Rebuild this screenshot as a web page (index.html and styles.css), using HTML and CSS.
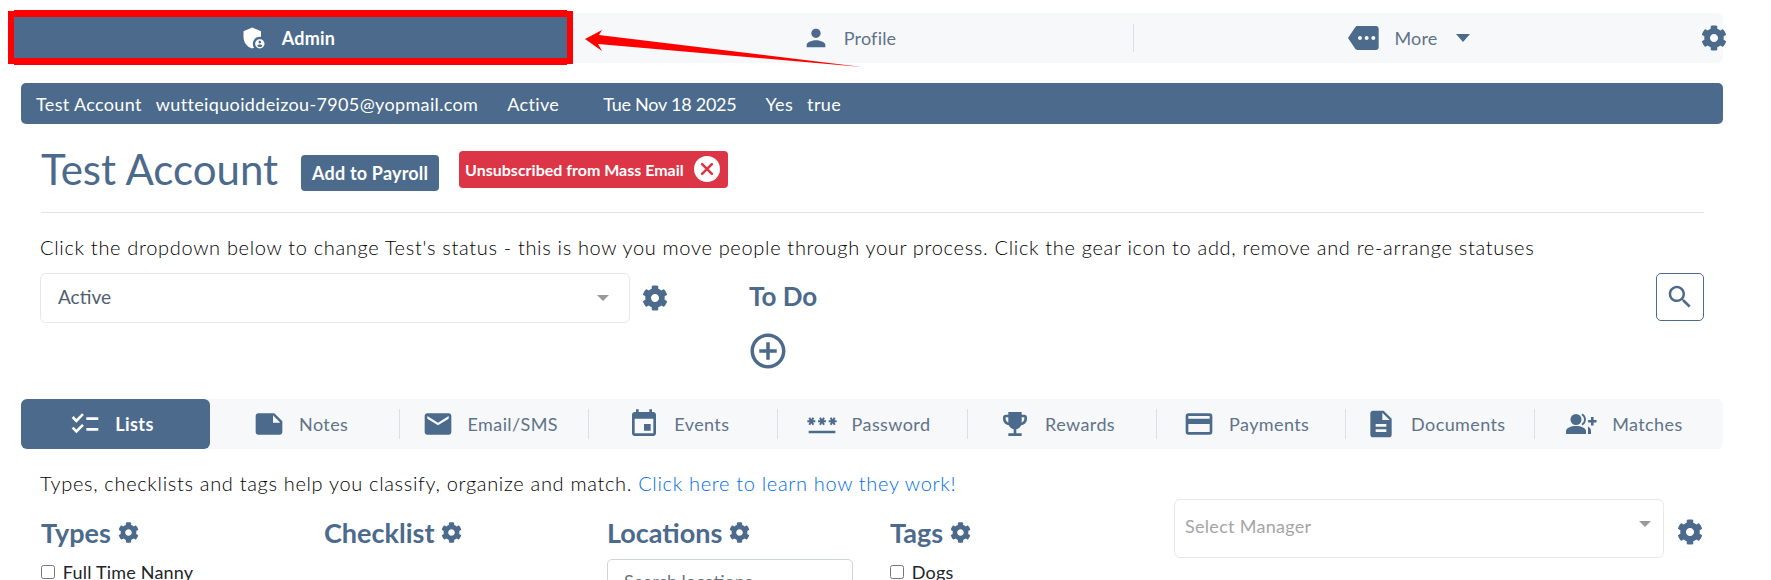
FILE: index.html
```html
<!DOCTYPE html>
<html>
<head>
    <meta name="viewport" content="width=device-width, initial-scale=1">
    <title>Test Account</title>
    <link rel="stylesheet" href="styles.css">
</head>
<body>
    <svg class="sprites" width="0" height="0">
        <symbol id="cog" viewBox="0 0 512 512"><path d="M487.4 315.7l-42.6-24.6c4.3-23.2 4.3-47 0-70.2l42.6-24.6c4.9-2.8 7.1-8.6 5.5-14-11.1-35.6-30-67.8-54.7-94.6-3.8-4.1-10-5.1-14.8-2.3L380.8 110c-17.9-15.4-38.5-27.3-60.8-35.1V25.8c0-5.6-3.9-10.5-9.4-11.7-36.7-8.2-74.3-7.8-109.2 0-5.5 1.2-9.4 6.1-9.4 11.7V75c-22.2 7.9-42.8 19.8-60.8 35.1L88.7 85.5c-4.9-2.8-11-1.9-14.8 2.3-24.7 26.7-43.6 58.9-54.7 94.6-1.7 5.4.6 11.2 5.5 14L67.3 221c-4.3 23.2-4.3 47 0 70.2l-42.6 24.6c-4.9 2.8-7.1 8.6-5.5 14 11.1 35.6 30 67.8 54.7 94.6 3.8 4.1 10 5.1 14.8 2.3l42.6-24.6c17.9 15.4 38.5 27.3 60.8 35.1v49.2c0 5.6 3.9 10.5 9.4 11.7 36.7 8.2 74.3 7.8 109.2 0 5.5-1.2 9.4-6.1 9.4-11.7v-49.2c22.2-7.9 42.8-19.8 60.8-35.1l42.6 24.6c4.9 2.8 11 1.9 14.8-2.3 24.7-26.7 43.6-58.9 54.7-94.6 1.5-5.5-.7-11.3-5.6-14.1zM256 336c-44.1 0-80-35.9-80-80s35.9-80 80-80 80 35.9 80 80-35.9 80-80 80z"/></symbol>
    </svg>

    <div class="top-nav">
        <div class="nav-item active">
            <svg class="nav-icon admin-icon" viewBox="0 0 24 24"><path d="M17 11c.34 0 .67.04 1 .09V6.27L10.5 3 3 6.27v4.91c0 4.54 3.2 8.79 7.5 9.82.55-.13 1.08-.32 1.6-.55-.69-.98-1.1-2.17-1.1-3.45 0-3.31 2.69-6 6-6z"/><path d="M17 13c-2.21 0-4 1.79-4 4s1.79 4 4 4 4-1.79 4-4-1.79-4-4-4zm0 1.38c.62 0 1.12.51 1.12 1.12s-.51 1.12-1.12 1.12-1.12-.51-1.12-1.12.5-1.12 1.12-1.12zm0 5.37c-.93 0-1.74-.46-2.24-1.17.05-.72 1.51-1.08 2.24-1.08s2.19.36 2.24 1.08c-.5.71-1.31 1.17-2.24 1.17z"/></svg>
            <span>Admin</span>
        </div>
        <div class="nav-item profile-item">
            <svg class="nav-icon" viewBox="0 0 24 24"><path d="M12 12c2.21 0 4-1.79 4-4s-1.79-4-4-4-4 1.79-4 4 1.79 4 4 4zm0 2c-2.67 0-8 1.34-8 4v2h16v-2c0-2.66-5.33-4-8-4z"/></svg>
            <span>Profile</span>
        </div>
        <div class="nav-item with-divider">
            <svg class="nav-icon more-icon" viewBox="0 0 24 24"><path d="M21 3H7c-.69 0-1.23.35-1.59.88L0 12l5.41 8.11c.36.53.9.89 1.59.89h14c1.1 0 2-.9 2-2V5c0-1.1-.9-2-2-2zM9 13.5c-.83 0-1.5-.67-1.5-1.5s.67-1.5 1.5-1.5 1.5.67 1.5 1.5-.67 1.5-1.5 1.5zm5 0c-.83 0-1.5-.67-1.5-1.5s.67-1.5 1.5-1.5 1.5.67 1.5 1.5-.67 1.5-1.5 1.5zm5 0c-.83 0-1.5-.67-1.5-1.5s.67-1.5 1.5-1.5 1.5.67 1.5 1.5-.67 1.5-1.5 1.5z"/></svg>
            <span>More</span>
            <i class="caret"></i>
        </div>
        <svg class="cog nav-cog"><use href="#cog"/></svg>
    </div>

    <svg class="red-arrow" viewBox="0 0 300 50" width="300" height="50"><polygon points="1,16 18,7 15,12 278,44 14,21 18,28"/></svg>

    <div class="info-bar">
        <span>Test Account</span>
        <span class="info-email">wutteiquoiddeizou-7905@yopmail.com</span>
        <span class="info-status">Active</span>
        <span class="info-date">Tue Nov 18 2025</span>
        <span class="info-status">Yes</span>
        <span class="info-email">true</span>
    </div>

    <div class="main">
        <div class="title-row">
            <h1>Test Account</h1>
            <button class="payroll-btn">Add to Payroll</button>
            <div class="unsub-badge">
                Unsubscribed from Mass Email
                <svg class="unsub-x" viewBox="0 0 24 24"><circle cx="12" cy="12" r="12" fill="#fff"/><path d="M7.5 7.5l9 9M16.5 7.5l-9 9" stroke="#dc3545" stroke-width="2.4" stroke-linecap="round"/></svg>
            </div>
        </div>
        <p class="help-text">Click the dropdown below to change Test's status - this is how you move people through your process. Click the gear icon to add, remove and re-arrange statuses</p>

        <div class="status-row">
            <div class="select-box status-select"><span>Active</span><i class="select-caret"></i></div>
            <svg class="cog status-cog"><use href="#cog"/></svg>
            <div class="todo">
                <h3>To Do</h3>
                <svg class="plus-icon" viewBox="0 0 24 24"><path d="M13 7h-2v4H7v2h4v4h2v-4h4v-2h-4V7zm-1-5C6.48 2 2 6.48 2 12s4.48 10 10 10 10-4.48 10-10S17.52 2 12 2zm0 18c-4.41 0-8-3.59-8-8s3.59-8 8-8 8 3.59 8 8-3.59 8-8 8z"/></svg>
            </div>
            <div class="search-btn">
                <svg viewBox="0 0 24 24"><path d="M15.5 14h-.79l-.28-.27C15.41 12.59 16 11.11 16 9.5 16 5.91 13.09 3 9.5 3S3 5.91 3 9.5 5.91 16 9.5 16c1.61 0 3.09-.59 4.23-1.57l.27.28v.79l5 4.99L20.49 19l-4.99-5zm-6 0C7.01 14 5 11.99 5 9.5S7.01 5 9.5 5 14 7.01 14 9.5 11.99 14 9.5 14z"/></svg>
            </div>
        </div>
    </div>

    <div class="tabs">
        <div class="tab active">
            <svg viewBox="0 0 24 24"><path d="M22 7h-9v2h9V7zm0 8h-9v2h9v-2zM5.54 11 2 7.46l1.41-1.41 2.12 2.12 4.24-4.24 1.41 1.41L5.54 11zm0 8L2 15.46l1.41-1.41 2.12 2.12 4.24-4.24 1.41 1.41L5.54 19z"/></svg>
            <span>Lists</span>
        </div>
        <div class="tab">
            <svg viewBox="0 0 24 24"><path d="M22 10l-6-6H4c-1.1 0-2 .9-2 2v12.01c0 1.1.9 1.99 2 1.99l16-.01c1.1 0 2-.89 2-1.99v-8zm-7-4.5l5.5 5.5H15V5.5z"/></svg>
            <span>Notes</span>
        </div>
        <div class="tab">
            <svg viewBox="0 0 24 24"><path d="M20 4H4c-1.1 0-1.99.9-1.99 2L2 18c0 1.1.9 2 2 2h16c1.1 0 2-.9 2-2V6c0-1.1-.9-2-2-2zm0 4l-8 5-8-5V6l8 5 8-5v2z"/></svg>
            <span>Email/SMS</span>
        </div>
        <div class="tab">
            <svg viewBox="0 0 24 24"><path d="M17 12h-5v5h5v-5zM16 1v2H8V1H6v2H5c-1.11 0-1.99.9-1.99 2L3 19c0 1.1.89 2 2 2h14c1.1 0 2-.9 2-2V5c0-1.1-.9-2-2-2h-1V1h-2zm3 18H5V8h14v11z"/></svg>
            <span>Events</span>
        </div>
        <div class="tab">
            <svg viewBox="0 0 24 24"><path d="M2 17h20v2H2v-2zm1.15-4.05L4 11.47l.85 1.48 1.3-.75-.85-1.48H7v-1.5H5.3l.85-1.47L4.85 7 4 8.47 3.15 7l-1.3.75.85 1.47H1v1.5h1.7l-.85 1.48 1.3.75zm6.7-.75 1.3.75.85-1.48.85 1.48 1.3-.75-.85-1.48H15v-1.5h-1.7l.85-1.47-1.3-.75L12 8.47 11.15 7l-1.3.75.85 1.47H9v1.5h1.7l-.85 1.48zM23 9.22h-1.7l.85-1.47-1.3-.75L20 8.47 19.15 7l-1.3.75.85 1.47H17v1.5h1.7l-.85 1.48 1.3.75.85-1.48.85 1.48 1.3-.75-.85-1.48H23v-1.5z"/></svg>
            <span>Password</span>
        </div>
        <div class="tab">
            <svg viewBox="0 0 24 24"><path d="M19 5h-2V3H7v2H5c-1.1 0-2 .9-2 2v1c0 2.55 1.92 4.63 4.39 4.94.63 1.5 1.98 2.63 3.61 2.96V19H7v2h10v-2h-4v-3.1c1.63-.33 2.98-1.46 3.61-2.96C19.08 12.63 21 10.55 21 8V7c0-1.1-.9-2-2-2zM5 8V7h2v3.82C5.84 10.4 5 9.3 5 8zm14 0c0 1.3-.84 2.4-2 2.82V7h2v1z"/></svg>
            <span>Rewards</span>
        </div>
        <div class="tab">
            <svg viewBox="0 0 24 24"><path d="M20 4H4c-1.11 0-1.99.89-1.99 2L2 18c0 1.11.89 2 2 2h16c1.11 0 2-.89 2-2V6c0-1.11-.89-2-2-2zm0 14H4v-6h16v6zm0-10H4V6h16v2z"/></svg>
            <span>Payments</span>
        </div>
        <div class="tab">
            <svg viewBox="0 0 24 24"><path d="M14 2H6c-1.1 0-1.99.9-1.99 2L4 20c0 1.1.89 2 1.99 2H18c1.1 0 2-.9 2-2V8l-6-6zm2 16H8v-2h8v2zm0-4H8v-2h8v2zm-3-5V3.5L18.5 9H13z"/></svg>
            <span>Documents</span>
        </div>
        <div class="tab">
            <svg viewBox="0 0 32 32"><circle cx="10" cy="11.5" r="5.5"/><path d="M0 26v-3c0-3 5-5 10-5s10 2 10 5v3z"/><path d="M22 18.6c1.6.9 3 2.3 3 4.4v3h-3z"/><path d="M16 6.2c2 1.3 3 3.2 3 5.3s-1 4-3 5.3" fill="none" stroke="#4b6a8c" stroke-width="1.8"/><path d="M25 9h2.6v2.9h2.9v2.6h-2.9v2.9H25v-2.9h-2.9v-2.6H25z"/></svg>
            <span>Matches</span>
        </div>
    </div>

    <div class="lists">
        <div class="lists-left">
            <p class="help-text">Types, checklists and tags help you classify, organize and match. <a href="#">Click here to learn how they work!</a></p>
            <div class="list-cols">
                <div class="list-col">
                    <h3>Types <svg class="cog"><use href="#cog"/></svg></h3>
                    <label><input type="checkbox"> Full Time Nanny</label>
                </div>
                <div class="list-col">
                    <h3>Checklist <svg class="cog"><use href="#cog"/></svg></h3>
                </div>
                <div class="list-col">
                    <h3>Locations <svg class="cog"><use href="#cog"/></svg></h3>
                    <div class="location-search">Search locations</div>
                </div>
                <div class="list-col">
                    <h3>Tags <svg class="cog"><use href="#cog"/></svg></h3>
                    <label><input type="checkbox"> Dogs</label>
                </div>
            </div>
        </div>
        <div class="manager">
            <div class="select-box manager-select"><span>Select Manager</span><i class="select-caret"></i></div>
            <svg class="cog manager-cog"><use href="#cog"/></svg>
        </div>
    </div>
</body>
</html>
```

FILE: styles.css
```css
* {
    box-sizing: border-box;
}

html, body {
    height: 580px;
    overflow: hidden;
}

body {
    margin: 0;
    padding: 0 48px 0 21px;
    position: relative;
    background: white;
    color: #212529;
    font-family: Lato, "Open Sans", sans-serif;
    font-size: 18px;
}

.sprites {
    position: absolute;
}

svg {
    fill: #4b6a8c;
    flex-shrink: 0;
}

.cog {
    width: 21px;
    height: 21px;
}

/* top nav */
.top-nav {
    display: flex;
    align-items: center;
    height: 50px;
    margin: 13px 0 20px -7px;
    background: #f7f8fa;
    border-radius: 6px;
    color: #5f7389;
}

.nav-item {
    flex: 1;
    height: 100%;
    display: flex;
    align-items: center;
    justify-content: center;
    gap: 14px;
    font-size: 18px;
    letter-spacing: .2px;
    position: relative;
}

.nav-item.active {
    flex: none;
    width: 553px;
    margin: 4px 6px 5px 0;
    height: 41px;
    padding-right: 6px;
    background: #4b6a8c;
    color: white;
    font-weight: 700;
    outline: 6px solid #ff0000;
    box-shadow: 0 -7px 0 #ff0000, 0 7px 0 #ff0000;
}

.nav-item.active svg {
    fill: white;
}

.admin-icon {
    width: 30px;
    height: 30px;
}

.profile-item {
    flex: none;
    width: 560px;
    padding-right: 8px;
}

.nav-item.with-divider::before {
    content: "";
    position: absolute;
    left: 0;
    top: 11px;
    bottom: 11px;
    border-left: 1px solid #dcdfe3;
}

.nav-icon {
    width: 28px;
    height: 28px;
}

.more-icon {
    width: 32px;
    height: 32px;
}

.caret {
    border-left: 7px solid transparent;
    border-right: 7px solid transparent;
    border-top: 8px solid #4b6a8c;
    margin-left: 4px;
}

.nav-cog {
    width: 26px;
    height: 26px;
    margin: 0 -4px 0 16px;
}

.red-arrow {
    position: absolute;
    left: 584px;
    top: 23px;
    fill: #ff0000;
    overflow: visible;
}

/* info bar */
.info-bar {
    display: flex;
    align-items: center;
    height: 41px;
    padding-left: 15px;
    background: #4b6a8c;
    border-radius: 5px;
    color: white;
    font-size: 18px;
    letter-spacing: .35px;
}

.info-email {
    margin-left: 14px;
}

.info-status {
    margin-left: 29px;
}

.info-date {
    margin-left: 44px;
    letter-spacing: -.25px;
}

/* account header */
.main {
    padding: 0 19px 0 20px;
}

.title-row {
    display: flex;
    align-items: center;
    height: 89px;
    border-bottom: 1px solid #e3e3e3;
}

h1 {
    margin: 2px 23px 0 0;
    font-size: 42px;
    font-weight: 400;
    color: #4b6a8c;
    line-height: 1;
}

.payroll-btn {
    height: 36px;
    width: 138px;
    border: none;
    border-radius: 4px;
    background: #4b6a8c;
    color: white;
    font-family: inherit;
    font-size: 18px;
    letter-spacing: .2px;
    font-weight: 700;
    margin-top: 9px;
}

.unsub-badge {
    display: flex;
    align-items: center;
    justify-content: space-between;
    width: 269px;
    height: 37px;
    margin-left: 20px;
    margin-top: 2px;
    padding: 0 8px 0 6px;
    border-radius: 4px;
    background: #dc3545;
    color: white;
    font-size: 16px;
    font-weight: 700;
}

.unsub-x {
    width: 26px;
    height: 26px;
}

.help-text {
    margin: 0 0 0 -1px;
    color: #000;
    font-size: 20px;
    font-weight: 300;
    letter-spacing: .68px;
    line-height: 27px;
}

.main .help-text {
    padding-top: 21px;
}

a {
    color: #006ee6;
    text-decoration: none;
}

/* status row */
.status-row {
    display: flex;
    align-items: flex-start;
    height: 138px;
    padding-top: 12px;
    margin-left: -1px;
}

.select-box {
    display: flex;
    align-items: center;
    justify-content: space-between;
    background: white;
    border: 1px solid #e8e8e8;
    border-radius: 6px;
    color: #4f5f70;
}

.status-select {
    width: 590px;
    height: 50px;
    padding: 0 20px 0 17px;
    font-size: 19px;
}

.status-select span {
    margin-bottom: 4px;
}

.select-caret {
    border-left: 6px solid transparent;
    border-right: 6px solid transparent;
    border-top: 6px solid #999;
}

.status-cog {
    width: 26px;
    height: 26px;
    margin: 12px 0 0 12px;
}

.todo {
    margin-left: 81px;
    width: 150px;
}

h3 {
    margin: 0;
    font-size: 27px;
    font-weight: 700;
    color: #4b6a8c;
}

.todo h3 {
    margin-top: 7px;
    font-size: 26px;
}

.plus-icon {
    width: 42px;
    height: 42px;
    margin: 18px 0 0 -2px;
    display: block;
}

.search-btn {
    margin-left: auto;
    width: 48px;
    height: 48px;
    border: 1px solid #4b6a8c;
    border-radius: 5px;
    display: flex;
    align-items: center;
    justify-content: center;
}

.search-btn svg {
    width: 30px;
    height: 30px;
}

/* tabs */
.tabs {
    display: flex;
    align-items: center;
    height: 50px;
    background: #f7f8fa;
    border-radius: 6px;
    font-size: 18px;
    letter-spacing: .4px;
    color: #5f7389;
}

.tab {
    flex: 1;
    height: 100%;
    display: flex;
    align-items: center;
    justify-content: center;
    gap: 14px;
    padding-right: 8px;
    position: relative;
}

.tab svg {
    width: 32px;
    height: 32px;
}

.tab.active {
    background: #4b6a8c;
    border-radius: 6px;
    color: white;
    font-weight: 700;
}

.tab.active svg {
    fill: white;
}

.tab + .tab + .tab::before {
    content: "";
    position: absolute;
    left: 0;
    top: 10px;
    bottom: 10px;
    border-left: 1px solid #dcdfe3;
}

/* lists section */
.lists {
    display: flex;
    padding: 21px 19px 0 20px;
}

.lists-left {
    flex: 1;
}

.list-cols {
    display: grid;
    grid-template-columns: repeat(4, 283px);
    margin-top: 19px;
}

.list-col h3 {
    display: flex;
    align-items: center;
    gap: 7px;
    margin-bottom: 12px;
}

.list-col label {
    display: block;
    font-size: 18px;
    letter-spacing: .2px;
}

.list-col input {
    margin: 0 3px 0 0;
    width: 14px;
    height: 14px;
}

.location-search {
    width: 246px;
    height: 50px;
    margin-top: -2px;
    padding: 10px 16px;
    border: 1px solid #ced4da;
    border-radius: 5px;
    color: #6c757d;
    font-size: 18px;
}

.manager {
    display: flex;
    align-items: center;
    position: absolute;
    left: 1174px;
    top: 499px;
}

.manager-select {
    width: 490px;
    height: 59px;
    padding: 0 12px 6px 10px;
    color: #a5a5a5;
    font-size: 18px;
    letter-spacing: .3px;
}

.manager-select .select-caret {
    margin-bottom: 4px;
}

.manager-cog {
    width: 26px;
    height: 26px;
    margin: 6px 0 0 13px;
}
```
